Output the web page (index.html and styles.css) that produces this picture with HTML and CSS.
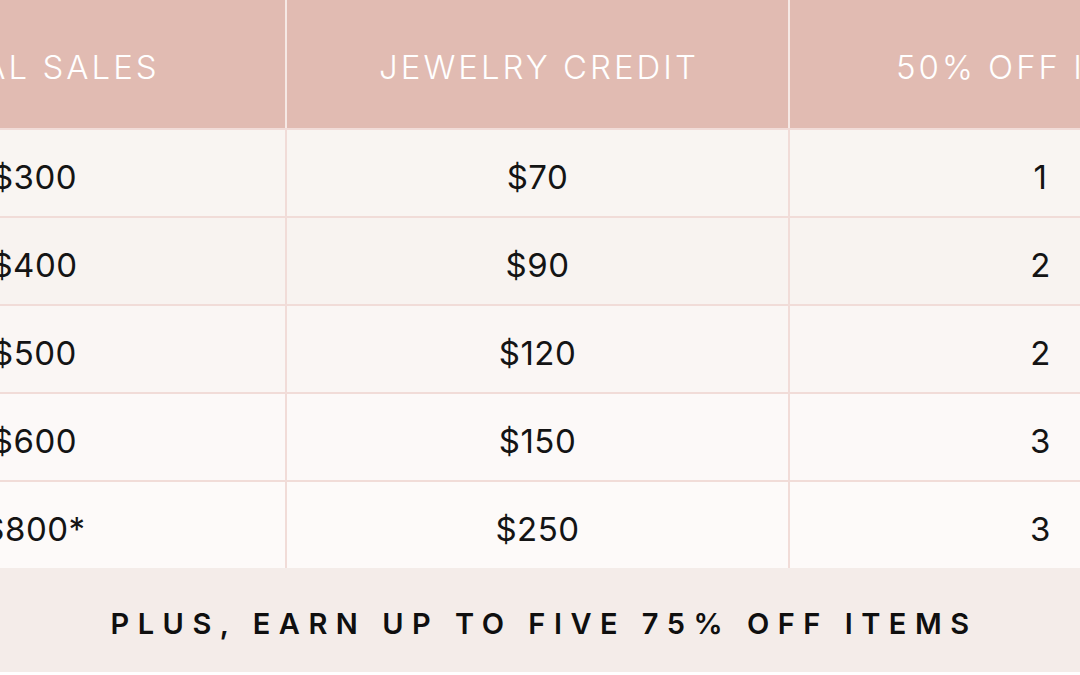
FILE: index.html
```html
<!DOCTYPE html>
<html lang="en">
<head>
<meta charset="utf-8">
<title>Host Rewards</title>
<link rel="stylesheet" href="styles.css">
</head>
<body>
<div class="page">
  <div class="rewards">
    <div class="thead">
      <div class="th">TOTAL SALES</div>
      <div class="th">JEWELRY CREDIT</div>
      <div class="th">50% OFF ITEMS</div>
    </div>
    <div class="tbody">
      <div class="td r1">$300</div><div class="td r1">$70</div><div class="td r1">1</div>
      <div class="td r2">$400</div><div class="td r2">$90</div><div class="td r2">2</div>
      <div class="td r3">$500</div><div class="td r3">$120</div><div class="td r3">2</div>
      <div class="td r4">$600</div><div class="td r4">$150</div><div class="td r4">3</div>
      <div class="td r5">$800*</div><div class="td r5">$250</div><div class="td r5">3</div>
    </div>
  </div>
  <div class="plus">PLUS, EARN UP TO FIVE 75% OFF ITEMS</div>
</div>
</body>
</html>
```
FILE: styles.css
```css
html, body {
  margin: 0;
  padding: 0;
  background: #ffffff;
}
body {
  width: 1080px;
  height: 675px;
  overflow: hidden;
  font-family: Inter, "Liberation Sans", sans-serif;
}
.page {
  width: 1080px;
  overflow: hidden;
}
.rewards {
  width: 1507px;
  margin-left: -216px;
}
.thead {
  display: grid;
  grid-template-columns: repeat(3, 501px);
  column-gap: 2px;
  background: #f6e9e5;
}
.th {
  height: 128px;
  background: #e1bbb2;
  color: #ffffff;
  font-weight: 300;
  font-size: 33px;
  letter-spacing: 3px;
  display: flex;
  align-items: center;
  justify-content: center;
  padding-top: 5px;
  padding-left: 3px;
  box-sizing: border-box;
}
.tbody {
  display: grid;
  grid-template-columns: repeat(3, 501px);
  gap: 2px;
  padding-top: 2px;
  background: #f1dcd8;
}
.td {
  height: 86px;
  color: #141414;
  font-weight: 400;
  font-size: 33px;
  letter-spacing: 0.5px;
  display: flex;
  align-items: center;
  justify-content: center;
  padding-top: 7px;
  box-sizing: border-box;
}
.r1 { background: #f9f5f2; }
.r2 { background: #f8f3f0; }
.r3 { background: #faf6f4; }
.r4 { background: #fcf9f8; }
.r5 { background: #fdfaf9; }
.plus {
  height: 104px;
  background: #f4ece9;
  color: #0f0f0f;
  font-weight: 600;
  font-size: 29px;
  letter-spacing: 8.5px;
  display: flex;
  align-items: center;
  justify-content: center;
  padding-top: 7px;
  padding-left: 8px;
  box-sizing: border-box;
}
```
